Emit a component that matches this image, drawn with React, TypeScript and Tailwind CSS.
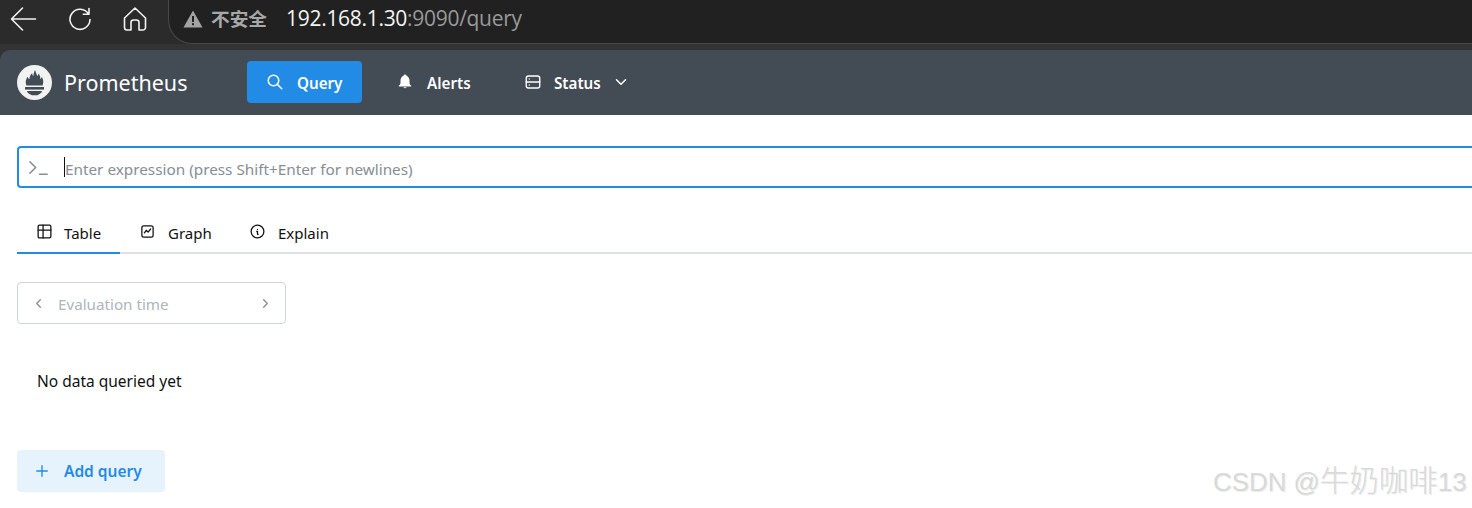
import React from "react";

const Ic = ({ size = 18, sw = 2, cls = "", children }: { size?: number; sw?: number; cls?: string; children: React.ReactNode }) => (
  <svg width={size} height={size} viewBox="0 0 24 24" fill="none" stroke="currentColor" strokeWidth={sw} strokeLinecap="round" strokeLinejoin="round" className={`shrink-0 ${cls}`}>
    {children}
  </svg>
);

const Logo = () => (
  <svg width="35" height="35" viewBox="0 0 35 35" className="shrink-0">
    <circle cx="17.5" cy="17.5" r="17.5" fill="#f1f2f2" />
    <path d="M9.500 20.500C7.800 16.500 9.600 14 10.300 11.800C11 13 11.600 13.800 12.400 14.200C12.600 11 14 8.800 15.200 8.200C15.200 9.800 15.800 10.600 16.400 11C16.600 8.500 17.200 6.500 18 5C18.600 7 19.600 8.800 20.200 11C20.900 10.400 21.400 9.600 21.600 8.400C22.800 10 23.400 12.200 23.400 14.200C24 13.800 24.600 12.800 24.900 11.800C25.800 14.400 27.200 16.600 25.500 20.500Z" fill="#434b54" />
    <rect x="8" y="22" width="19" height="2.600" fill="#434b54" />
    <path d="M10 26H25C24.600 28.200 22.800 29 21.600 29.400C20.800 30.600 14.400 30.600 13.600 29.400C12.200 29 10.400 28.200 10 26Z" fill="#434b54" />
  </svg>
);

const NavItem = ({ icon, label, active, w, gap, trailing }: { icon: React.ReactNode; label: string; active?: boolean; w: string; gap: string; trailing?: React.ReactNode }) => (
  <div className={`flex h-[42px] items-center rounded-[4px] pl-[19px] text-[15.200px] font-semibold text-white ${w} ${active ? "bg-[#228be6]" : ""}`}>
    {icon}
    <span className={`translate-y-[1px] ${gap}`}>{label}</span>
    {trailing}
  </div>
);

const Tab = ({ icon, label, active, w, gap }: { icon: React.ReactNode; label: string; active?: boolean; w: string; gap: string }) => (
  <div className={`flex h-[40px] items-center pl-[19px] text-[15px] text-[#111] -mb-[2px] border-b-2 ${w} ${active ? "border-[#228be6]" : "border-transparent"}`}>
    <span className="-mt-[3px]">{icon}</span>
    <span className={gap}>{label}</span>
  </div>
);

export default function App() {
  return (
    <div className="relative h-[508px] w-[1472px] overflow-hidden bg-white font-['Noto_Sans',sans-serif]">
      {/* browser chrome */}
      <div className="bg-[#333333]">
        <div className="h-[50px]">
          <div className="flex h-[44px] w-full bg-[#2b2b2b]">
            <div className="flex w-[168px] shrink-0 items-start pt-[6px] text-[#f2f2f2]">
              <svg width="28" height="26" viewBox="0 0 28 26" fill="none" stroke="currentColor" strokeWidth="1.6" strokeLinecap="round" strokeLinejoin="round" className="ml-[10px]">
                <path d="M1.500 13H25.500M12.500 2L1.500 13L12.500 24" />
              </svg>
              <svg width="26" height="26" viewBox="0 0 26 26" fill="none" stroke="currentColor" strokeWidth="1.600" strokeLinecap="round" strokeLinejoin="round" className="ml-[29px]">
                <path d="M21.500 8A10 10 0 1 0 23 13.500M22 2.500V8.200H16.300" />
              </svg>
              <svg width="26" height="26" viewBox="0 0 26 26" fill="none" stroke="currentColor" strokeWidth="1.600" strokeLinecap="round" strokeLinejoin="round" className="ml-[29px]">
                <path d="M2.500 12L13 2L23.500 12V21.500A2.500 2.500 0 0 1 21 24H17V16.500A2.500 2.500 0 0 0 14.500 14H11.500A2.500 2.500 0 0 0 9 16.500V24H5A2.500 2.500 0 0 1 2.500 21.500Z" />
              </svg>
            </div>
            <div className="flex h-[44px] flex-1 items-center rounded-bl-[24px] border-b border-l border-[#484848] bg-[#212121] pb-[6px]">
              <svg width="20" height="18" viewBox="0 0 20 18" className="ml-[14px] shrink-0">
                <path d="M10 0.500L19.500 17.500H0.500Z" fill="#a3a3a3" />
                <rect x="9" y="6" width="2" height="6" fill="#212121" />
                <rect x="9" y="13.200" width="2" height="2" fill="#212121" />
              </svg>
              <span className="ml-[8px] font-['Noto_Sans_CJK_SC',sans-serif] text-[18.700px] font-bold text-[#a8a8a8]">不安全</span>
              <span className="ml-[19px] font-['Open_Sans',sans-serif] text-[21px] tracking-[-0.3px] text-[#f4f4f4]">
                192.168.1.30<span className="text-[#9a9a9a]">:9090/query</span>
              </span>
            </div>
          </div>
        </div>
        {/* Header */}
        <div className="flex h-[65px] items-center rounded-tl-[10px] bg-[#434b54] pb-[1px] pl-[17px]">
          <Logo />
          <span className="ml-[12px] w-[183px] translate-y-[1px] text-[21.500px] text-white">Prometheus</span>
          <NavItem active w="w-[115px]" gap="ml-[13px]" label="Query" icon={<Ic size={18}><path d="M3 10a7 7 0 1 0 14 0a7 7 0 1 0 -14 0" /><path d="M21 21l-6 -6" /></Ic>} />
          <NavItem
            w="w-[128px] ml-[15px]"
            gap="ml-[13px]"
            label="Alerts"
            icon={
              <svg width="18" height="18" viewBox="0 0 24 24" fill="currentColor" className="shrink-0">
                <path d="M14.200 19a2.500 2.500 0 0 1-4.400 0ZM12 2a2 2 0 0 1 2 1.700A7 7 0 0 1 18 10v3c0 1.600.8 2.800 2 3.600.6.5.3 1.400-.5 1.400h-15c-.8 0-1.100-.9-.5-1.400C5.200 15.800 6 14.600 6 13v-3a7 7 0 0 1 4-6.300A2 2 0 0 1 12 2Z" />
              </svg>
            }
          />
          <NavItem
            w="w-[128px]"
            gap="ml-[12px]"
            label="Status"
            icon={<Ic size={18} sw={1.800}><rect x="3" y="4" width="18" height="16" rx="3" /><path d="M3 12h18M7 8v.01M7 16v.01" /></Ic>}
            trailing={<Ic size={18} cls="ml-[11px]"><path d="M6 9l6 6l6 -6" /></Ic>}
          />
        </div>
      </div>
      {/* Main */}
      <div className="px-[17px] pt-[31px]">
        <div className="-mr-[40px] flex h-[42px] items-center rounded-[4px] border-2 border-[#228be6] pl-[8px]">
          <span className="text-[#868e96]">
            <Ic size={23} sw={1.700}><path d="M3 6l6 6l-6 6" /><path d="M13 19l8 0" /></Ic>
          </span>
          <span className="ml-[14px] h-[20px] w-[1px] bg-[#111]" />
          <span className="translate-y-[2px] text-[15.300px] text-[#868e96]">Enter expression (press Shift+Enter for newlines)</span>
        </div>
        <div className="mt-[26px] -mr-[17px] flex border-b-2 border-[#dee2e6]">
          <Tab active w="w-[103px]" gap="ml-[11px]" label="Table" icon={<Ic size={17} sw={1.800}><path d="M3 5a2 2 0 0 1 2 -2h14a2 2 0 0 1 2 2v14a2 2 0 0 1 -2 2h-14a2 2 0 0 1 -2 -2v-14z" /><path d="M3 10h18M10 3v18" /></Ic>} />
          <Tab w="w-[110px] ml-[1px]" gap="ml-[13px]" label="Graph" icon={<Ic size={15} sw={2}><rect x="3" y="3" width="18" height="18" rx="3" /><path d="M7 14l3-4l3 3l4-5" /></Ic>} />
          <Tab w="w-[120px] -ml-[1px]" gap="ml-[12px]" label="Explain" icon={<Ic size={17} sw={1.800}><path d="M3 12a9 9 0 1 0 18 0a9 9 0 0 0 -18 0" /><path d="M12 9h.01M11 12h1v4h1" /></Ic>} />
        </div>
        <div className="mt-[28px] flex h-[42px] w-[269px] items-center rounded-[4px] border border-[#ced4da] pl-[13px] pr-[12px]">
          <span className="text-[#868e96]"><Ic size={15}><path d="M15 6l-6 6l6 6" /></Ic></span>
          <span className="ml-[12px] flex-1 translate-y-[1px] text-[15.200px] text-[#adb5bd]">Evaluation time</span>
          <span className="text-[#868e96]"><Ic size={15}><path d="M9 6l6 6l-6 6" /></Ic></span>
        </div>
        <p className="mt-[46px] pl-[20px] text-[15.500px] leading-[22px] text-[#111]">No data queried yet</p>
        <div className="mt-[58px] flex h-[42px] w-[148px] items-center rounded-[4px] bg-[#e7f3fc] pl-[16px] text-[15.500px] font-semibold text-[#228be6]">
          <Ic size={18} sw={1.800}><path d="M12 5v14M5 12h14" /></Ic>
          <span className="ml-[13px] translate-y-[1px]">Add query</span>
        </div>
      </div>
      <div className="absolute left-[1213px] top-[463px] whitespace-nowrap font-['Liberation_Sans','Noto_Sans_CJK_SC',sans-serif] text-[25.900px] leading-[36px] text-[#d9d9d9] [text-shadow:1px_1px_0_#ececec]">
        CSDN @<span className="text-[29.500px] font-light">牛奶咖啡</span>13
      </div>
    </div>
  );
}
